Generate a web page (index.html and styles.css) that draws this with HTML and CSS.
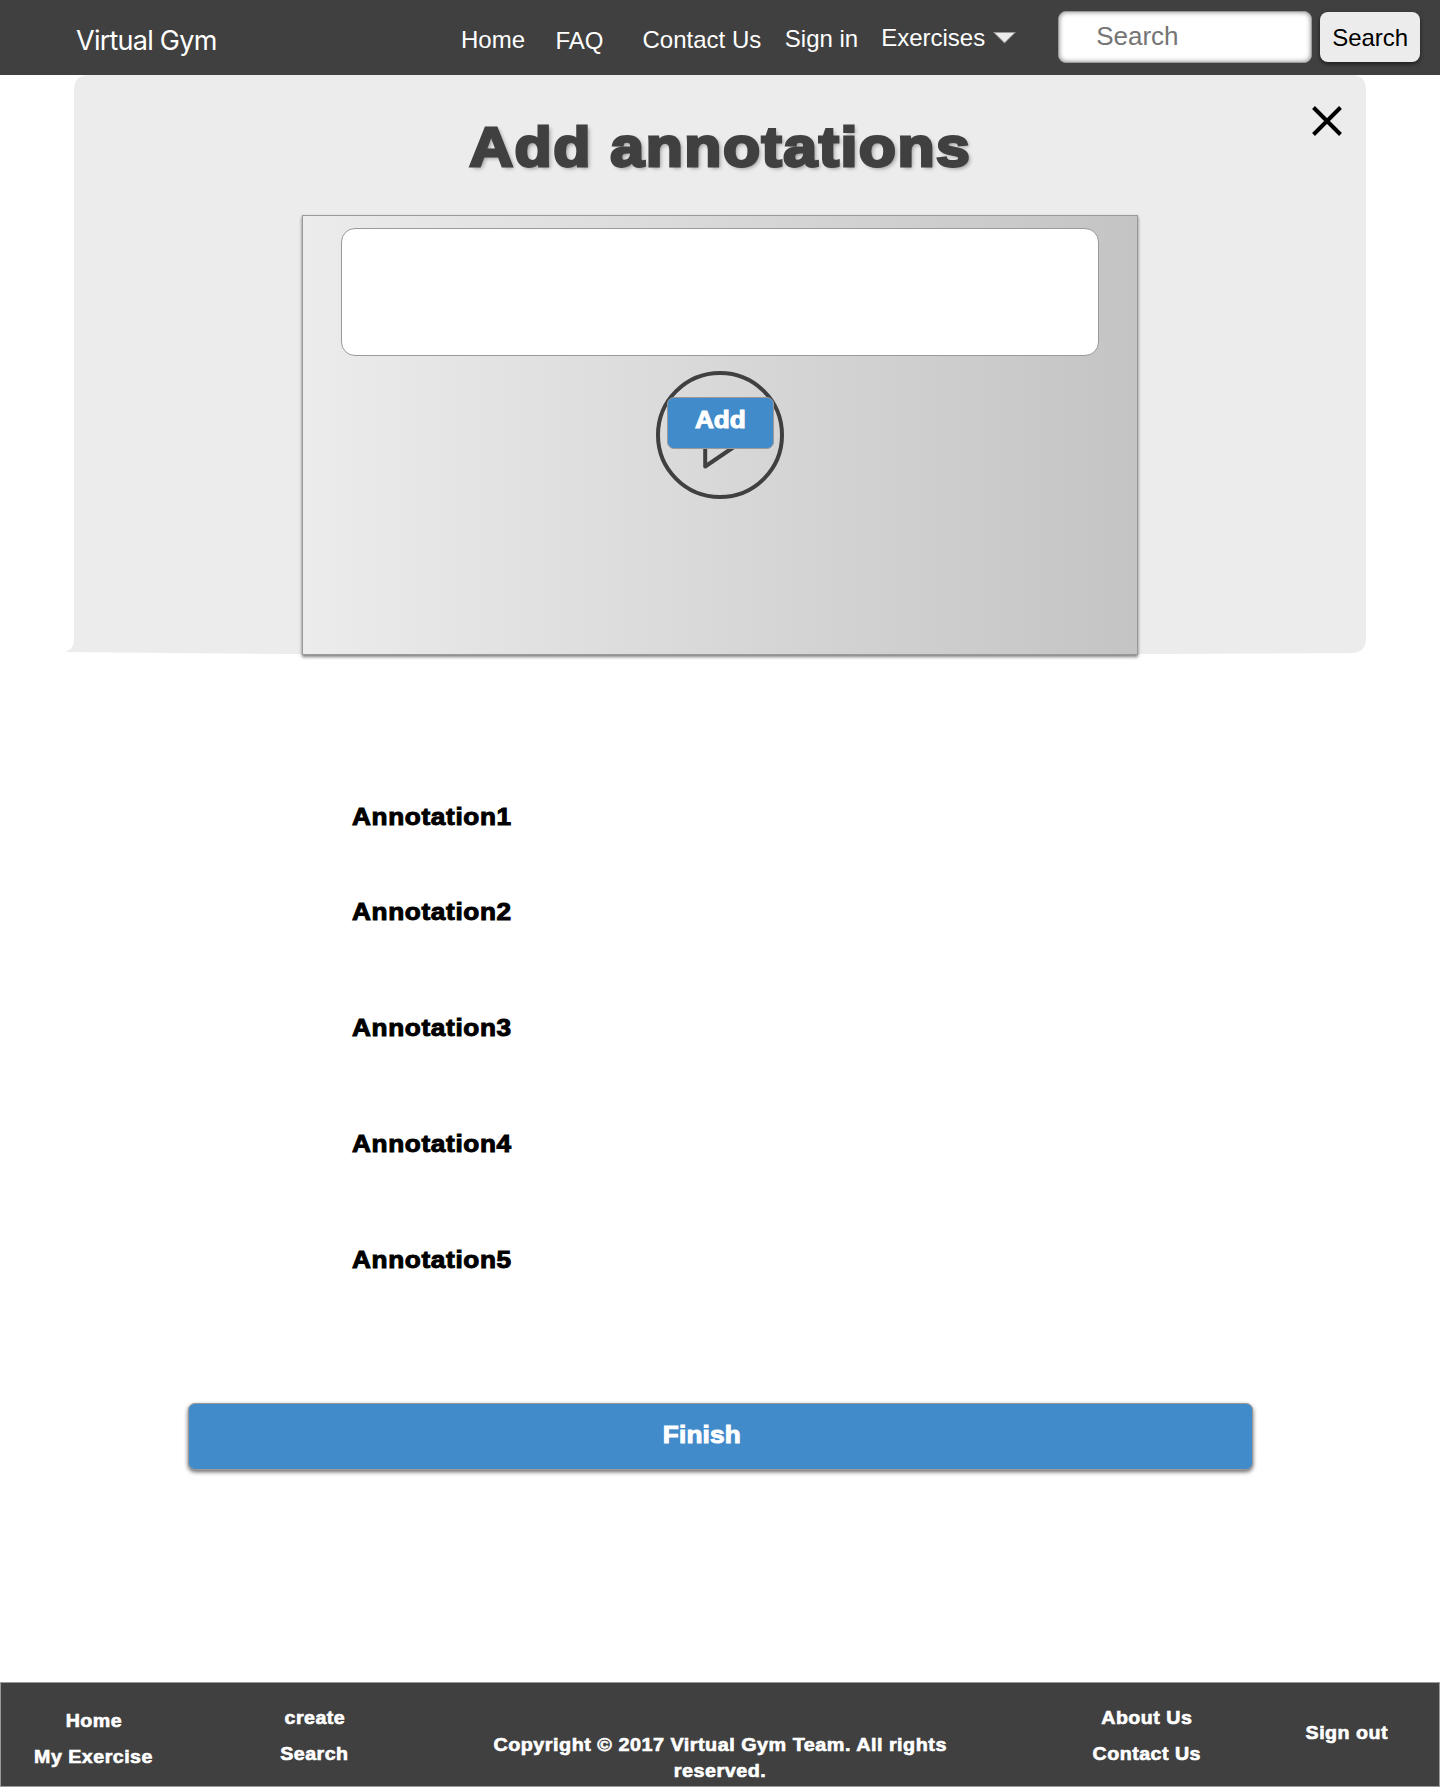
FILE: index.html
```html
<!DOCTYPE html>
<html lang="en">
<head>
<meta charset="utf-8">
<title>Virtual Gym - Add annotations</title>
<link rel="stylesheet" href="styles.css">
</head>
<body>
<header class="topbar">
  <div class="brand">Virtual Gym</div>
  <nav class="nav">
    <a class="nav-home">Home</a>
    <a class="nav-faq">FAQ</a>
    <a class="nav-contact">Contact Us</a>
    <a class="nav-sign">Sign in</a>
    <a class="nav-exercises">Exercises<svg class="caret" width="23" height="12" viewBox="0 0 23 12"><path d="M0 0H23L11.5 11.5Z" fill="#999"/><path d="M2 1H21L11.5 10.3Z" fill="#ececec"/></svg></a>
  </nav>
  <div class="search-field">Search</div>
  <div class="search-button">Search</div>
</header>
<main>
  <section class="hero">
    <svg class="hero-shape" width="1310" height="580" viewBox="0 0 1310 580"><path d="M9 15Q9 0 24 0H1287Q1301 0 1301 15V563Q1301 578 1286 578L1080 579H230L0 577Q9 574 9 565Z" fill="#ececec"/></svg>
    <svg class="close" width="30" height="30" viewBox="0 0 30 30"><path d="M1.5 1.5L28.5 28.5M28.5 1.5L1.5 28.5" stroke="#000" stroke-width="4"/></svg>
    <h1 class="title"><span class="heavy">Add annotations</span></h1>
    <div class="panel">
      <div class="note-input"></div>
      <div class="comment">
        <svg class="comment-icon" width="128" height="128" viewBox="0 0 128 128" fill="none" stroke="#404040" stroke-width="4" stroke-linejoin="round"><circle cx="64" cy="64" r="62"/><path d="M49.2 70V95.5L80 74.5"/></svg>
        <div class="add-button"><span class="heavy">Add</span></div>
      </div>
    </div>
  </section>
  <ul class="annotations">
    <li><span class="heavy">Annotation1</span></li>
    <li><span class="heavy">Annotation2</span></li>
    <li><span class="heavy">Annotation3</span></li>
    <li><span class="heavy">Annotation4</span></li>
    <li><span class="heavy">Annotation5</span></li>
  </ul>
  <div class="finish"><span class="heavy">Finish</span></div>
</main>
<footer class="footer">
  <div class="col col-home"><span class="heavy">Home</span><span class="heavy">My Exercise</span></div>
  <div class="col col-create"><span class="heavy">create</span><span class="heavy">Search</span></div>
  <div class="col col-copy"><span class="heavy">Copyright © 2017 Virtual Gym Team. All rights</span><span class="heavy">reserved.</span></div>
  <div class="col col-about"><span class="heavy">About Us</span><span class="heavy">Contact Us</span></div>
  <div class="col col-out"><span class="heavy">Sign out</span></div>
</footer>
</body>
</html>
```
FILE: styles.css
```css
* { box-sizing: border-box; }
body {
  margin: 0;
  width: 1440px;
  height: 1787px;
  display: flex;
  flex-direction: column;
  background: #fff;
  font-family: "Liberation Sans", Arial, sans-serif;
}
main { flex: 1; }

/* Wide, extra-black lettering */
.heavy {
  display: inline-block;
  font-weight: 700;
  white-space: nowrap;
  letter-spacing: 0.025em;
  transform: scaleX(1.09);
  -webkit-text-stroke: 0.042em currentColor;
}

.topbar {
  display: flex;
  align-items: flex-start;
  height: 75px;
  background: #404040;
  color: #fff;
}
.brand {
  width: 385px;
  margin-left: 76px;
  padding-top: 25px;
  font: 400 27px/32px Inter, sans-serif;
  letter-spacing: -0.75px;
}
.nav {
  display: grid;
  grid-template-columns: 94.5px 87px 142.3px 96.4px 177px;
  font-size: 24px;
  line-height: 28px;
  white-space: nowrap;
}
.nav-home, .nav-contact { padding-top: 26px; }
.nav-faq { padding-top: 27px; }
.nav-sign { padding-top: 25px; }
.nav-exercises { padding-top: 24px; }
.caret { margin: 0 0 2px 8px; }
.search-field {
  width: 254px;
  height: 52px;
  margin-top: 11px;
  padding: 9px 0 0 37px;
  border-radius: 8px;
  border: 1px solid #999;
  background: #fff;
  box-shadow: inset 0 0 5px rgba(0, 0, 0, 0.5);
  color: #757575;
  font-size: 26px;
  line-height: 30px;
}
.search-button {
  width: 100px;
  height: 50px;
  margin: 12px 0 0 8px;
  padding-top: 12px;
  border-radius: 8px;
  background: #ececec;
  box-shadow: 0 2px 4px rgba(0, 0, 0, 0.55);
  color: #000;
  text-align: center;
  font-size: 24px;
  line-height: 28px;
}

.hero {
  position: relative;
  height: 580px;
  padding-top: 40px;
}
.hero-shape { position: absolute; left: 65px; top: 0; }
.close { position: absolute; left: 1312px; top: 31px; }
.title {
  position: relative;
  margin: 0;
  text-align: center;
  color: #404040;
  font-size: 55.5px;
  line-height: 64px;
  text-shadow: 2px 2px 4px rgba(0, 0, 0, 0.4);
}
.title .heavy {
  transform: scaleX(1.095);
  -webkit-text-stroke-width: 0.05em;
}
.panel {
  position: relative;
  width: 836px;
  height: 440px;
  margin: 36px auto 0;
  padding-top: 12px;
  border: 1px solid #999;
  background: linear-gradient(90deg, #ececec, #c4c4c4);
  box-shadow: 0 2px 3px rgba(0, 0, 0, 0.5);
}
.note-input {
  width: 758px;
  height: 128px;
  margin: 0 auto;
  border: 1px solid #999;
  border-radius: 14px;
  background: #fff;
}
.comment {
  position: relative;
  width: 128px;
  height: 128px;
  margin: 15px auto 0;
}
.comment-icon { display: block; }
.add-button {
  position: absolute;
  left: 11px;
  top: 26px;
  width: 107px;
  height: 52px;
  padding-top: 7px;
  border: 1px solid #999;
  border-radius: 7px;
  background: #428bca;
  color: #fff;
  text-align: center;
  font-size: 24px;
  line-height: 30px;
}
.add-button .heavy { letter-spacing: 0; }

.annotations {
  margin: 147px 0 0 352px;
  padding: 0;
  list-style: none;
  font-size: 24px;
  line-height: 30px;
}
.annotations li { height: 116px; }
.annotations li:first-child { height: 95px; }
.annotations li:last-child { height: 30px; }
.annotations .heavy { transform-origin: left; }
.finish {
  width: 1065px;
  height: 67px;
  margin: 128px auto 0;
  padding: 16px 37px 0 0;
  border: 1px solid #999;
  border-radius: 7px;
  background: #428bca;
  box-shadow: 0 2px 4px rgba(0, 0, 0, 0.6);
  color: #fff;
  text-align: center;
  font-size: 24px;
  line-height: 30px;
}
.finish .heavy { letter-spacing: 0.008em; }

.footer {
  display: flex;
  height: 105px;
  border: 1px solid #999;
  background: #404040;
  color: #fff;
  font-size: 18px;
  line-height: 36px;
}
.footer .heavy { -webkit-text-stroke-width: 0.034em; }
.col { display: flex; flex-direction: column; align-items: center; }
.col-home { width: 185px; padding-top: 20px; }
.col-create { width: 257px; padding-top: 17px; }
.col-copy { width: 554px; padding-top: 49px; line-height: 26px; }
.col-copy .heavy { transform: scaleX(1.1); }
.col-about { width: 299px; padding-top: 17px; }
.col-out { width: 101px; padding-top: 32px; }
```
